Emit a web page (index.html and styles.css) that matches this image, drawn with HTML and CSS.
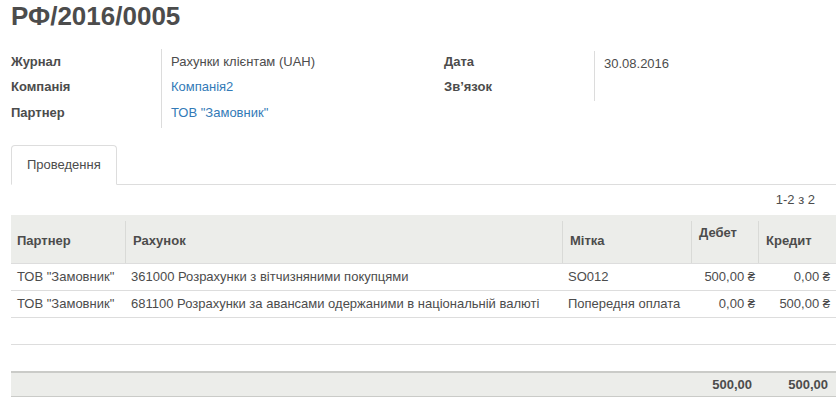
FILE: index.html
```html
<!DOCTYPE html>
<html lang="uk">
<head>
<meta charset="utf-8">
<title>РФ/2016/0005</title>
<link rel="stylesheet" href="styles.css">
</head>
<body>
<div class="sheet">
  <h1 class="title">РФ/2016/0005</h1>

  <div class="groups">
    <div class="group group-left">
      <div class="labels">
        <div class="row label">Журнал</div>
        <div class="row label">Компанія</div>
        <div class="row label">Партнер</div>
      </div>
      <div class="values">
        <div class="row">Рахунки клієнтам (UAH)</div>
        <div class="row"><a class="link">Компанія2</a></div>
        <div class="row"><a class="link">ТОВ "Замовник"</a></div>
      </div>
    </div>
    <div class="group group-right">
      <div class="labels">
        <div class="row label">Дата</div>
        <div class="row label">Зв’язок</div>
      </div>
      <div class="values values-right">
        <div class="row row-date">30.08.2016</div>
        <div class="row">&nbsp;</div>
      </div>
    </div>
  </div>

  <div class="tabs">
    <div class="tab">Проведення</div>
  </div>

  <div class="pager">1-2 з 2</div>

  <table class="lines">
    <colgroup>
      <col class="c-partner">
      <col class="c-account">
      <col class="c-label">
      <col class="c-debit">
      <col class="c-credit">
    </colgroup>
    <thead>
      <tr>
        <th>Партнер</th>
        <th>Рахунок</th>
        <th>Мітка</th>
        <th class="th-top">Дебет</th>
        <th>Кредит</th>
      </tr>
    </thead>
    <tbody>
      <tr>
        <td>ТОВ "Замовник"</td>
        <td>361000 Розрахунки з вітчизняними покупцями</td>
        <td>SO012</td>
        <td class="num debit">500,00 ₴</td>
        <td class="num credit">0,00 ₴</td>
      </tr>
      <tr>
        <td>ТОВ "Замовник"</td>
        <td>681100 Розрахунки за авансами одержаними в національній валюті</td>
        <td>Попередня оплата</td>
        <td class="num debit">0,00 ₴</td>
        <td class="num credit">500,00 ₴</td>
      </tr>
      <tr class="empty">
        <td>&nbsp;</td><td></td><td></td><td></td><td></td>
      </tr>
      <tr class="empty">
        <td>&nbsp;</td><td></td><td></td><td></td><td></td>
      </tr>
    </tbody>
    <tfoot>
      <tr>
        <td>&nbsp;</td>
        <td></td>
        <td></td>
        <td class="num debit-total">500,00</td>
        <td class="num credit-total">500,00</td>
      </tr>
    </tfoot>
  </table>
</div>
</body>
</html>
```

FILE: styles.css
```css
html, body {
  margin: 0;
  padding: 0;
  background: #ffffff;
}

body {
  font-family: "Liberation Sans", Arial, "DejaVu Sans", sans-serif;
  font-size: 13px;
  color: #4c4c4c;
}

.sheet {
  padding: 0 4px 0 11px;
}

.title {
  margin: 0;
  padding-top: 1px;
  font-size: 26px;
  line-height: 30px;
  font-weight: bold;
  color: #4c4c4c;
}

.groups {
  display: flex;
  margin-top: 18px;
}

.group {
  display: flex;
}

.group-left {
  width: 433px;
}

.group-right {
  flex: 1;
}

.labels {
  width: 150px;
}

.values {
  border-left: 1px solid #dcdcdc;
  padding-left: 9px;
  padding-bottom: 3px;
  flex: 1;
}

.values-right {
  padding-bottom: 0;
  margin-top: 2px;
  align-self: flex-start;
}

.row {
  line-height: 25px;
  height: 25px;
  white-space: nowrap;
}

.values .row + .row,
.labels .row + .row {
  height: 25.5px;
}

.values-right .row {
  height: 24px;
  line-height: 23px;
}

.values-right .row-date {
  line-height: 25px;
}

.label {
  font-weight: bold;
}

.link {
  color: #337ab7;
  text-decoration: none;
}

.tabs {
  display: flex;
  margin-top: 17px;
  border-bottom: 1px solid #dddddd;
}

.tab {
  padding: 9px 15px;
  line-height: 20px;
  border: 1px solid #dddddd;
  border-bottom-color: #ffffff;
  border-radius: 4px 4px 0 0;
  margin-bottom: -1px;
  background: #ffffff;
}

.pager {
  text-align: right;
  line-height: 30px;
  padding-right: 21px;
}

.lines {
  width: 100%;
  table-layout: fixed;
  border-collapse: separate;
  border-spacing: 0;
}

.c-partner { width: 114px; }
.c-account { width: 437px; }
.c-label { width: 129px; }
.c-debit { width: 67px; }
.c-credit { width: 78px; }

.lines thead tr {
  background: #ecedea;
}

.lines th {
  text-align: left;
  font-weight: bold;
  line-height: 20px;
  padding: 16px 6px 12px 8px;
  vertical-align: top;
  white-space: nowrap;
}

.lines th:first-child {
  padding-left: 6px;
}

.lines th + th {
  background-image: linear-gradient(#d9dad7, #d9dad7);
  background-size: 1px calc(100% - 6px);
  background-position: left bottom;
  background-repeat: no-repeat;
}

.lines th.th-top {
  padding-top: 8px;
}

.lines td {
  border-top: 1px solid #dddddd;
  padding: 6px 6px;
  line-height: 14px;
  white-space: nowrap;
  overflow: hidden;
}

.lines td.num {
  text-align: right;
}

.lines td.debit {
  padding-right: 3px;
}

.lines td.credit {
  padding-right: 6px;
}

.lines tfoot td {
  background: #ecedea;
  border-top: 2px solid #cacbc8;
  border-bottom: 1px solid #cacbc8;
  padding: 5px 6px 4px 6px;
  font-weight: bold;
}

.lines tfoot td.debit-total {
  padding-right: 6px;
}

.lines tfoot td.credit-total {
  padding-right: 8px;
}
```
